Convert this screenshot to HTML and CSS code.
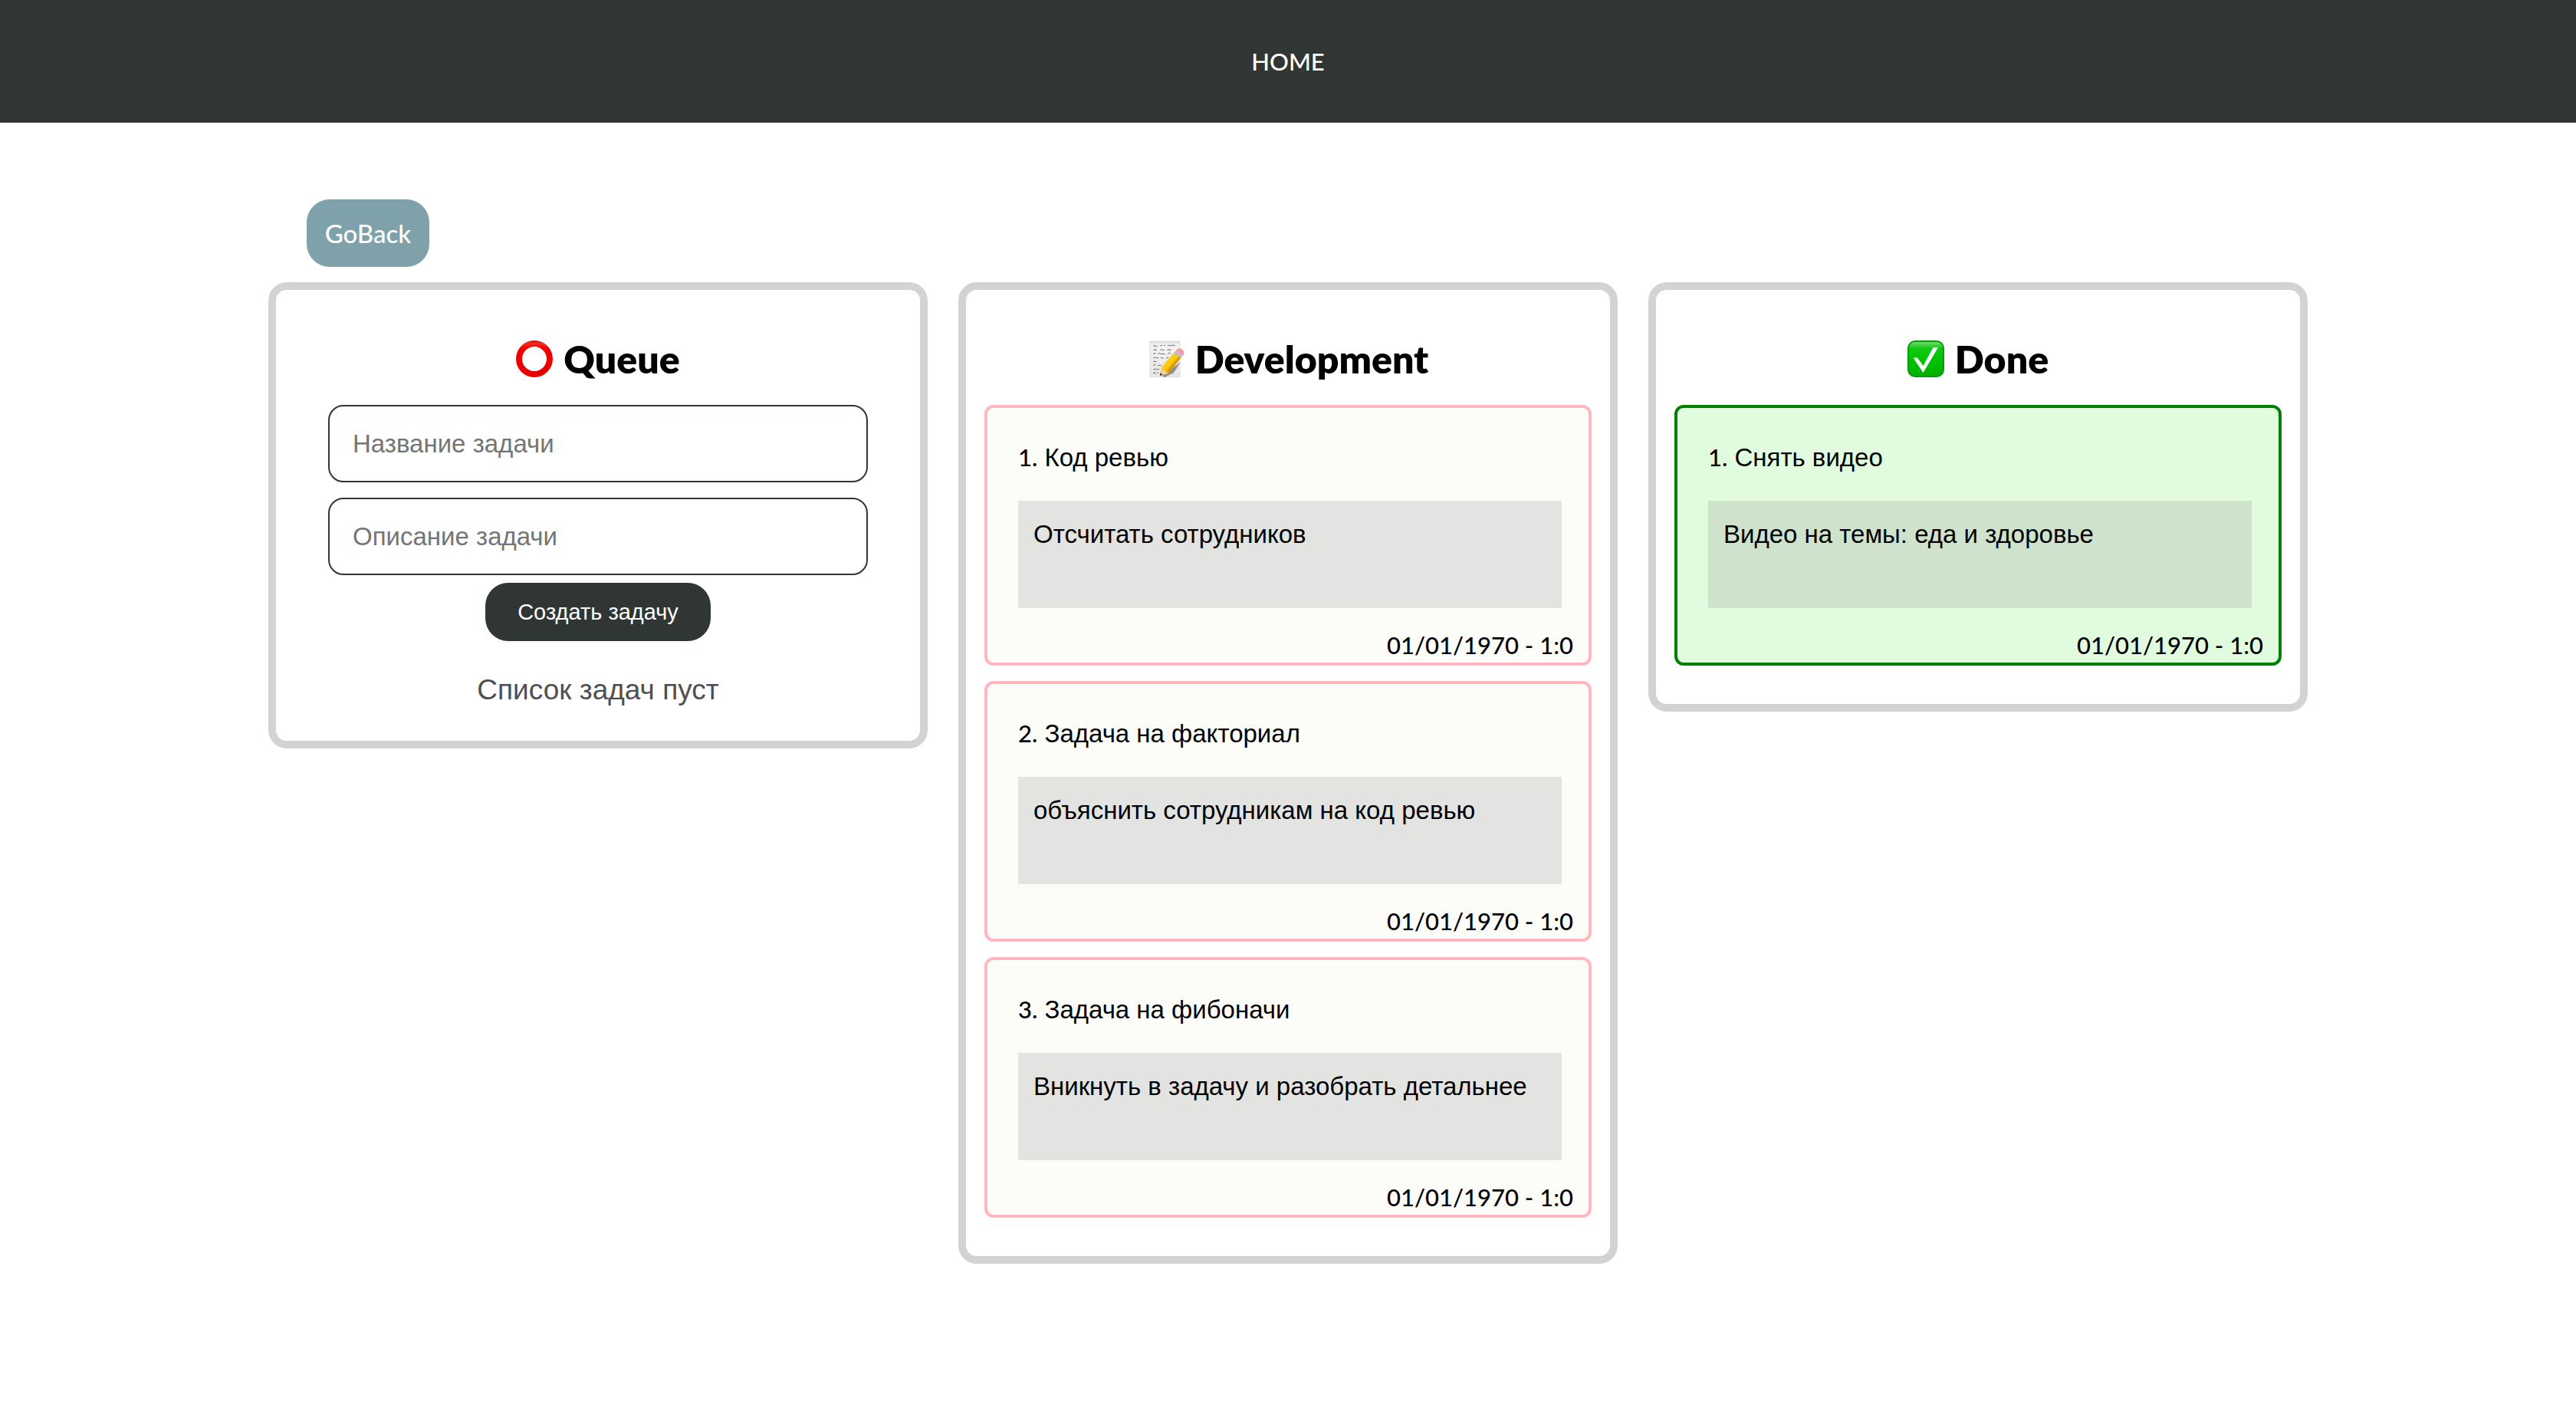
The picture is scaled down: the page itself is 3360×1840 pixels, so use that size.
FILE: index.html
```html
<!DOCTYPE html>
<html lang="ru">
<head>
<meta charset="utf-8">
<title>Tasks</title>
<link rel="stylesheet" href="styles.css">
</head>
<body>
<header class="header">
  <nav><a class="header-link" href="#">HOME</a></nav>
</header>
<main class="page">
  <button class="back" type="button">GoBack</button>
  <div class="board">
    <section class="column">
      <h2 class="column-title">
        <svg class="icon" viewBox="0 0 48 48" aria-hidden="true">
          <defs><linearGradient id="ring" x1="0" y1="0" x2="0" y2="1"><stop offset="0" stop-color="#c40808"/><stop offset=".08" stop-color="#f82a20"/><stop offset=".22" stop-color="#f00000"/><stop offset="1" stop-color="#e60000"/></linearGradient></defs>
          <path fill="url(#ring)" fill-rule="evenodd" d="M24 0a24 24 0 1 0 0 48a24 24 0 1 0 0-48zM24 8a16 16 0 1 1 0 32a16 16 0 1 1 0-32z"/>
        </svg>
        <span>Queue</span>
      </h2>
      <form class="form">
        <input class="field" type="text" placeholder="Название задачи" aria-label="Название задачи">
        <input class="field" type="text" placeholder="Описание задачи" aria-label="Описание задачи">
        <button class="submit" type="button">Создать задачу</button>
      </form>
      <p class="empty">Список задач пуст</p>
    </section>

    <section class="column">
      <h2 class="column-title">
        <svg class="icon" viewBox="0 0 48 48" aria-hidden="true">
          <defs>
            <linearGradient id="paper" x1="0" y1="0" x2="0" y2="1"><stop offset="0" stop-color="#dedede"/><stop offset=".12" stop-color="#f4f4f4"/><stop offset="1" stop-color="#e6e6e6"/></linearGradient>
            <linearGradient id="wood" x1="0" y1="0" x2="1" y2="1"><stop offset="0" stop-color="#ffe24a"/><stop offset=".5" stop-color="#fcc60f"/><stop offset="1" stop-color="#dc8f00"/></linearGradient>
          </defs>
          <path fill="url(#paper)" stroke="#cfcfcf" stroke-width=".6" d="M3 1h39v47H3z"/>
          <path fill="none" stroke="#777" stroke-width="1" d="M7 8l2-2 1 2 3-1m3 0l3-1m2 1l2-1m3 1l2-1 2 1 3-1 3 1M7 13l2-2 1 2 2-1m4 1l2-2 2 2 2-1m3 1l2-2 1 2 3-1M7 18l2-2 1 2m3 0l2-2 2 2 3-1 3 1m3 0l2-2 2 1M7 23l3-1 2 1 2-1m3 1l2-1 1 2m4-1l3-1M7 28l2-1 3 1M7 33l2-2 1 2m3 0l3-1 2 1M7 38l3-1 2 1 3-1M7 43l2-2 1 3m2-1l2-1"/>
          <path fill="#333" opacity=".5" d="M19 46l3 2 12-6 9-14z"/>
          <path fill="url(#wood)" d="M17 36L35 15l9 7-17 21z"/>
          <path fill="#b97800" opacity=".45" d="M41 20l3 2-17 21-3-2z"/>
          <path fill="#f0cd98" d="M17 36l-1 10 11-3-3-3-3-1z"/>
          <path fill="#444" d="M16 42v4l4-1z"/>
          <path fill="#b9c2ca" d="M34 16l3-3 9 7-3 3z"/>
          <path fill="#f49aa0" d="M37 13c2-3 5-4 8-1 3 2 3 5 1 8z"/>
        </svg>
        <span>Development</span>
      </h2>
      <ul class="tasks">
        <li class="task">
          <h3 class="task-title"><span class="task-number">1.</span> Код ревью</h3>
          <p class="task-text">Отсчитать сотрудников</p>
          <time class="task-date">01/01/1970 - 1:0</time>
        </li>
        <li class="task">
          <h3 class="task-title"><span class="task-number">2.</span> Задача на факториал</h3>
          <p class="task-text">объяснить сотрудникам на код ревью</p>
          <time class="task-date">01/01/1970 - 1:0</time>
        </li>
        <li class="task">
          <h3 class="task-title"><span class="task-number">3.</span> Задача на фибоначи</h3>
          <p class="task-text">Вникнуть в задачу и разобрать детальнее</p>
          <time class="task-date">01/01/1970 - 1:0</time>
        </li>
      </ul>
    </section>

    <section class="column">
      <h2 class="column-title">
        <svg class="icon" viewBox="0 0 48 48" aria-hidden="true">
          <defs><linearGradient id="check" x1="0" y1="0" x2="0" y2="1"><stop offset="0" stop-color="#7ce07c"/><stop offset=".2" stop-color="#12c812"/><stop offset=".5" stop-color="#00c400"/><stop offset="1" stop-color="#00b000"/></linearGradient></defs>
          <rect x="1" y="1" width="46" height="46" rx="9" fill="url(#check)" stroke="#059a10" stroke-width="2"/>
          <path fill="#fff" d="M7.500 22.500h5.500l7.500 10.500L33.500 9h6.500L20.500 42z"/>
        </svg>
        <span>Done</span>
      </h2>
      <ul class="tasks">
        <li class="task task-done">
          <h3 class="task-title"><span class="task-number">1.</span> Снять видео</h3>
          <p class="task-text">Видео на темы: еда и здоровье</p>
          <time class="task-date">01/01/1970 - 1:0</time>
        </li>
      </ul>
    </section>
  </div>
</main>
</body>
</html>
```
FILE: styles.css
```css
* {
  box-sizing: border-box;
  margin: 0;
  padding: 0;
}

body {
  background: #fff;
  color: #000;
  font-family: Lato, "Liberation Sans", sans-serif;
  font-size: 31px;
  font-weight: 500;
  line-height: 40px;
}

.header {
  display: flex;
  justify-content: center;
  align-items: center;
  height: 160px;
  background: #303633;
}

.header-link {
  color: #fff;
  text-decoration: none;
}

.page {
  max-width: 2660px;
  margin: 0 auto;
  padding: 100px 0;
}

.back {
  display: block;
  min-width: 160px;
  height: 88px;
  margin: 0 50px 20px;
  padding: 0 20px;
  border: 0;
  border-radius: 30px;
  background: #7fa1aa;
  color: #fff;
  font-family: inherit;
  font-size: 33px;
  font-weight: 500;
}

.board {
  display: grid;
  grid-template-columns: repeat(3, 1fr);
  align-items: start;
  gap: 40px;
}

.column {
  padding: 60px 24px 50px;
  border: 10px solid lightgray;
  border-radius: 24px;
}

.column-title {
  display: flex;
  justify-content: center;
  align-items: center;
  gap: 14px;
  height: 60px;
  margin-bottom: 30px;
  font-size: 50px;
  font-weight: 800;
  line-height: 60px;
}

.icon {
  width: 48px;
  height: 48px;
}

.form {
  display: flex;
  flex-direction: column;
  align-items: center;
  gap: 20px;
  padding: 0 44px;
}

.field {
  width: 100%;
  height: 101px;
  padding: 0 30px;
  border: 2px solid #303633;
  border-radius: 20px;
  background: #fff;
  color: #000;
  font-family: "Liberation Sans", sans-serif;
  font-size: 33px;
}

.field::placeholder {
  color: #757575;
}

.submit {
  height: 76px;
  margin-top: -10px;
  padding: 0 42px;
  border: 0;
  border-radius: 30px;
  background: #303633;
  color: #fff;
  font-family: "Liberation Sans", sans-serif;
  font-size: 29px;
}

.empty {
  margin: 44px 0 -4px;
  color: #4f4f4f;
  font-family: "Liberation Sans", sans-serif;
  font-size: 37px;
  text-align: center;
}

.tasks {
  display: flex;
  flex-direction: column;
  gap: 20px;
  list-style: none;
}

.task {
  height: 340px;
  padding: 40px 35px 0 40px;
  border: 4px solid lightpink;
  border-radius: 12px;
  background: #fcfdf9;
}

.task-done {
  border-color: green;
  background: #e1fbdf;
}

.task-title,
.task-text {
  font-family: "Liberation Sans", sans-serif;
  font-size: 33px;
  font-weight: 400;
}

.task-title {
  margin: 4px 0 36px;
}

.task-number {
  font-family: Lato, sans-serif;
  font-size: 31px;
  font-weight: 500;
}

.task-text {
  min-height: 140px;
  padding: 24px 20px;
  background: rgba(128, 128, 128, 0.2);
}

.task-date {
  display: block;
  margin: 28px -15px 0 0;
  text-align: right;
}
```
